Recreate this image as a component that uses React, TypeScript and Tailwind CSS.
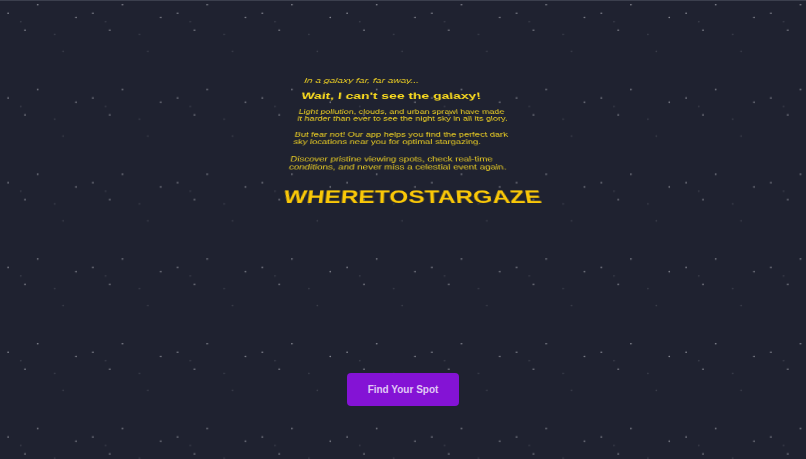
const brightStars: [number, number][] = [
  [37.7, 4.8],
  [8.1, 13.2],
  [76, 17.5],
  [25, 30.2],
];

const dimStars: [number, number][] = [
  [20.8, 21.7],
  [54.7, 34.4],
  [63.1, 51.3],
];

function StarField() {
  return (
    <svg className="absolute inset-0 h-full w-full" aria-hidden="true">
      <defs>
        <pattern id="stars" width="84.75" height="84.75" patternUnits="userSpaceOnUse">
          {brightStars.map(([x, y]) => (
            <circle key={`${x}-${y}`} cx={x} cy={y} r="0.8" fill="#c3c5cc" fillOpacity="0.7" />
          ))}
          {dimStars.map(([x, y]) => (
            <circle key={`${x}-${y}`} cx={x} cy={y} r="0.8" fill="#8b8e9a" fillOpacity="0.3" />
          ))}
        </pattern>
      </defs>
      <rect width="100%" height="100%" fill="url(#stars)" />
    </svg>
  );
}

function Crawl() {
  return (
    <section className="flex justify-center pt-[2px] [perspective:664px] [perspective-origin:50%_183px]">
      <div className="w-[234px] text-[10px] leading-[12px] text-[#eed022] [transform:rotateX(45deg)] [transform-origin:50%_181px]">
        <p className="text-[12px] leading-[16px] italic">In a galaxy far, far away...</p>
        <h2 className="mt-3 whitespace-nowrap text-[16px] leading-[20px] font-bold text-[#fbdc1e]">
          Wait, I can't see the galaxy!
        </h2>
        <div className="mt-[13px] flex flex-col gap-[15px]">
          <p>
            Light pollution, clouds, and urban sprawl have made it harder than ever to see the night
            sky in all its glory.
          </p>
          <p>
            But fear not! Our app helps you find the perfect dark sky locations near you for optimal
            stargazing.
          </p>
          <p>
            Discover pristine viewing spots, check real-time conditions, and never miss a celestial
            event again.
          </p>
        </div>
        <h1 className="mt-[22px] text-[24px] leading-[28px] font-bold text-[#fac807]">
          WHERETOSTARGAZE
        </h1>
      </div>
    </section>
  );
}

export default function App() {
  return (
    <main className="relative min-h-screen overflow-hidden bg-[#1f2230] font-['Liberation_Sans',Arial,sans-serif]">
      <StarField />
      <div className="relative flex min-h-screen flex-col justify-between border-t border-[#3b3f4d] pb-[53px]">
        <Crawl />
        <div className="flex justify-center">
          <button
            type="button"
            className="rounded bg-[#8413d5] px-[21px] py-2 text-[10px] leading-[17px] font-bold text-[#e0c8f5]"
          >
            Find Your Spot
          </button>
        </div>
      </div>
    </main>
  );
}
